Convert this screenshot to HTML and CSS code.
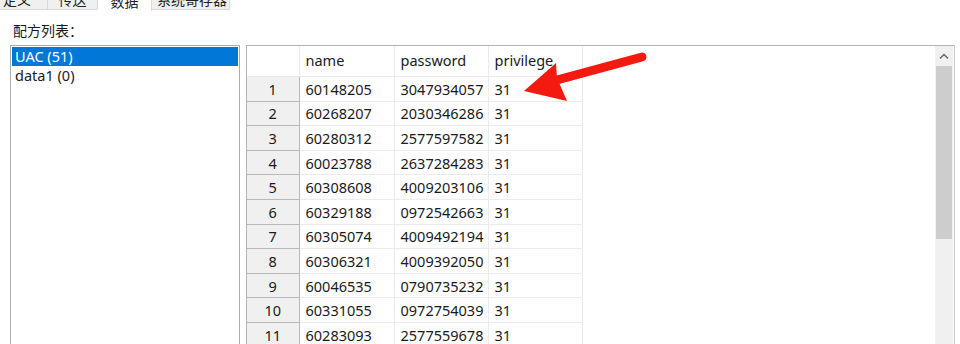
FILE: index.html
```html
<!DOCTYPE html>
<html lang="zh-CN">
  <head>
    <meta charset="UTF-8" />
    <meta name="viewport" content="width=device-width, initial-scale=1.0" />
    <title>配方数据</title>
    <link rel="stylesheet" href="styles.css">
  </head>
  <body>
    <div class="tabs">
      <div class="tab tab-first">定义</div>
      <div class="tab">传送</div>
      <div class="tab active">数据</div>
      <div class="tab">系统寄存器</div>
      <div class="tab-rest"></div>
    </div>

    <div class="page">
      <div class="caption">配方列表：</div>

      <div class="panes">
        <ul class="recipe-list">
          <li class="selected">UAC (51)</li>
          <li>data1 (0)</li>
        </ul>

        <div class="grid-box">
          <div class="grid-area">
            <table class="grid">
              <colgroup>
                <col class="c-idx" />
                <col class="c-name" />
                <col class="c-pass" />
                <col class="c-priv" />
              </colgroup>
              <thead>
                <tr>
                  <th class="corner"></th>
                  <th>name</th>
                  <th>password</th>
                  <th>privilege</th>
                </tr>
              </thead>
              <tbody>
                <tr><th>1</th><td>60148205</td><td>3047934057</td><td>31</td></tr>
                <tr><th>2</th><td>60268207</td><td>2030346286</td><td>31</td></tr>
                <tr><th>3</th><td>60280312</td><td>2577597582</td><td>31</td></tr>
                <tr><th>4</th><td>60023788</td><td>2637284283</td><td>31</td></tr>
                <tr><th>5</th><td>60308608</td><td>4009203106</td><td>31</td></tr>
                <tr><th>6</th><td>60329188</td><td>0972542663</td><td>31</td></tr>
                <tr><th>7</th><td>60305074</td><td>4009492194</td><td>31</td></tr>
                <tr><th>8</th><td>60306321</td><td>4009392050</td><td>31</td></tr>
                <tr><th>9</th><td>60046535</td><td>0790735232</td><td>31</td></tr>
                <tr><th>10</th><td>60331055</td><td>0972754039</td><td>31</td></tr>
                <tr><th>11</th><td>60283093</td><td>2577559678</td><td>31</td></tr>
              </tbody>
            </table>
          </div>

          <div class="vscroll">
            <div class="vscroll-btn">
              <svg width="10" height="6" viewBox="0 0 10 6">
                <path d="M1 5.5 L5 1.5 L9 5.5" fill="none" stroke="#606060" stroke-width="1.4" />
              </svg>
            </div>
            <div class="vscroll-thumb"></div>
          </div>
        </div>
      </div>
    </div>

    <!-- red annotation arrow drawn over the grid -->
    <svg class="mark" width="960" height="344" viewBox="0 0 960 344">
      <line x1="557" y1="80" x2="642" y2="57" stroke="#f41a10" stroke-width="9" stroke-linecap="round" />
      <polygon points="524,91 556,63 557,78 567,101" fill="#f41a10" />
    </svg>
  </body>
</html>
```

FILE: styles.css
```css
body {
  margin: 0;
  height: 344px;
  overflow: hidden;
  background: #fff;
  color: #1a1a1a;
  font-family: "Noto Sans", "Noto Sans CJK SC", sans-serif;
  font-size: 14.5px;
}
.tabs {
  display: flex;
  height: 11px;
  overflow: hidden;
}
.tab {
  display: flex;
  align-items: flex-end;
  justify-content: center;
  height: 10px;
  padding: 0;
  background: #f0f0f0;
  border: 1px solid #d9d9d9;
  border-top: none;
  border-left: none;
  font-family: "Noto Sans CJK SC", sans-serif;
  font-size: 14px;
  line-height: 20px;
  color: #222;
  white-space: nowrap;
  overflow: hidden;
  box-sizing: border-box;
}
.tab-first {
  width: 48px;
  justify-content: flex-start;
  padding-left: 3px;
}
.tab:nth-child(2) {
  width: 50px;
}
.tab.active {
  width: 54px;
  height: 11px;
  background: #fff;
  border-bottom: none;
}
.tab:nth-child(4) {
  width: 78px;
  justify-content: flex-start;
  padding-left: 5px;
}
.tab-rest {
  flex: 1;
  height: 10px;
}
.page {
  padding-left: 10px;
}
.caption {
  font-family: "Noto Sans CJK SC", sans-serif;
  font-size: 14px;
  line-height: 18px;
  padding: 10px 0 0 3px;
}
.panes {
  display: flex;
  gap: 6px;
  margin-top: 6px;
}
.recipe-list {
  list-style: none;
  margin: 0;
  padding: 1px;
  width: 230px;
  height: 320px;
  border: 1px solid #adadad;
  box-sizing: border-box;
}
.recipe-list li {
  height: 19px;
  line-height: 19px;
  padding-left: 3px;
}
.recipe-list li.selected {
  background: #0078d7;
  color: #fff;
}
.grid-box {
  display: flex;
  width: 709px;
  height: 320px;
  border: 1px solid #b4b4b4;
  border-right-color: #c8c8c8;
  padding-right: 1px;
  box-sizing: border-box;
}
.grid-area {
  flex: 1;
  overflow: hidden;
}
.grid {
  border-collapse: collapse;
  table-layout: fixed;
  width: 335px;
}
.c-idx { width: 52px; }
.c-name { width: 95px; }
.c-pass { width: 94px; }
.c-priv { width: 94px; }
.grid td,
.grid thead th {
  height: 23.6px;
  padding: 0 0 0 6px;
  border: 1px solid #ececec;
  text-align: left;
  font-weight: normal;
  white-space: nowrap;
}
.grid thead th {
  height: 28px;
  border-top: none;
  padding-bottom: 2px;
}
.grid thead th.corner {
  border-left: none;
}
.grid tbody th {
  height: 23.6px;
  padding: 0;
  background: #f0f0f0;
  border: 1px solid #b9b9b9;
  border-left: none;
  font-weight: normal;
  text-align: center;
}
.vscroll {
  width: 18px;
  background: #f0f0f0;
  display: flex;
  flex-direction: column;
  align-items: center;
}
.vscroll-btn {
  height: 20px;
  width: 100%;
  display: flex;
  align-items: center;
  justify-content: center;
}
.vscroll-thumb {
  width: 16px;
  height: 173px;
  background: #cdcdcd;
}
.mark {
  position: absolute;
  left: 0;
  top: 0;
  pointer-events: none;
}
```
